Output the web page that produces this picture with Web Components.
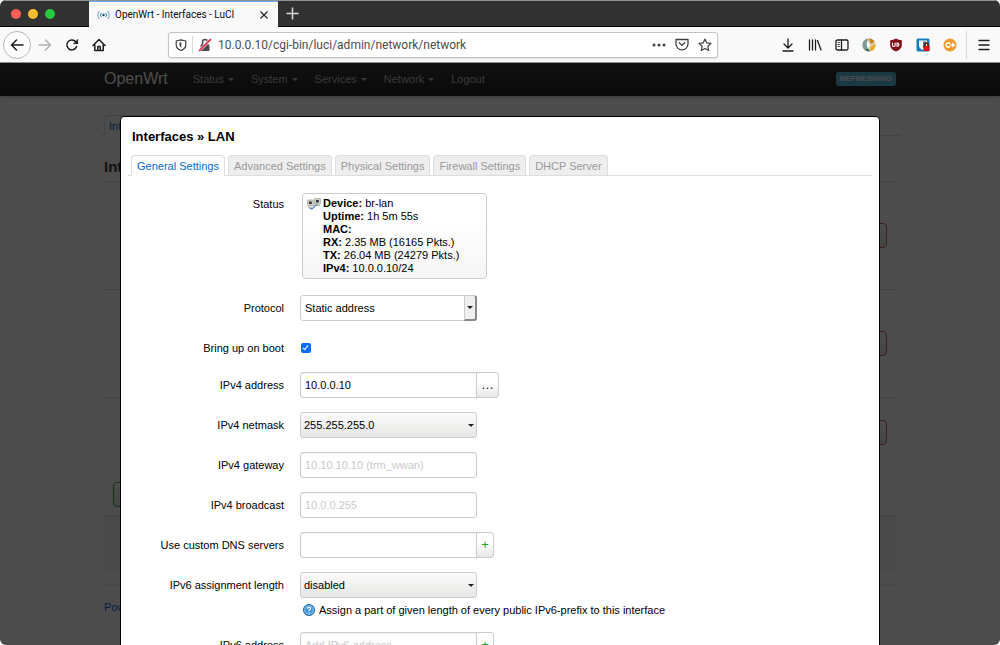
<!DOCTYPE html>
<html lang="en">
<head>
<meta charset="utf-8">
<title>OpenWrt - Interfaces - LuCI</title>
<style>
  html { background: #fff; }
  body { margin: 0; font: 11px/16px "Liberation Sans", Arial, sans-serif; color: #000; }
</style>
</head>
<body>
<browser-window>
  <browser-tabs slot="tabs"></browser-tabs>
  <browser-toolbar slot="toolbar"></browser-toolbar>
  <luci-header></luci-header>
  <luci-page></luci-page>
  <luci-modal slot="overlay" heading="Interfaces » LAN">
    <luci-status></luci-status>
    <luci-field label="Protocol" type="combo" value="Static address"></luci-field>
    <luci-field label="Bring up on boot" type="checkbox"></luci-field>
    <luci-field label="IPv4 address" type="text" value="10.0.0.10" action="…"></luci-field>
    <luci-field label="IPv4 netmask" type="select" value="255.255.255.0"></luci-field>
    <luci-field label="IPv4 gateway" type="text" placeholder="10.10.10.10 (trm_wwan)"></luci-field>
    <luci-field label="IPv4 broadcast" type="text" placeholder="10.0.0.255"></luci-field>
    <luci-field label="Use custom DNS servers" type="text" action="+"></luci-field>
    <luci-field label="IPv6 assignment length" type="select" value="disabled">Assign a part of given length of every public IPv6-prefix to this interface</luci-field>
    <luci-field label="IPv6 address" type="text" placeholder="Add IPv6 address…" action="+"></luci-field>
  </luci-modal>
</browser-window>

<script>
const define = (name, render) => customElements.define(name, class extends HTMLElement {
  constructor() { super(); this.attachShadow({ mode: 'open' }); }
  connectedCallback() { this.shadowRoot.innerHTML = render(this); }
});

define('browser-window', () => `
<style>
  :host { display: flex; flex-direction: column; height: 100vh; overflow: hidden; border-radius: 6px; background: #fff; }
  .view { flex: 1; min-height: 0; position: relative; overflow: hidden; }
  .shade { position: absolute; inset: 0; background: rgba(0,0,0,.7); display: flex; justify-content: center; align-items: flex-start; padding-top: 53px; }
</style>
<slot name="tabs"></slot>
<slot name="toolbar"></slot>
<div class="view"><slot></slot><div class="shade"><slot name="overlay"></slot></div></div>`);

define('browser-tabs', () => `
<style>
  :host { display: flex; height: 26px; background: #323232; border-top: 1px solid #8e9390; font-family: Roboto, sans-serif; }
  .lights { width: 89px; box-sizing: border-box; display: flex; align-items: center; gap: 5px; padding-left: 11px; border-bottom: 1px solid #000; }
  .lights i { width: 10px; height: 10px; border-radius: 50%; background: #ff5f57; margin-right: 2px; }
  .lights i:nth-child(2) { background: #febc2e; }
  .lights i:nth-child(3) { background: #28c840; }
  .tab { width: 189px; box-sizing: border-box; background: #f9f9fa; border-top: 1px solid #6aa9f5; display: flex; align-items: center; padding: 0 9px 0 8px; gap: 5px; }
  .tab span { flex: 1; font-size: 10px; line-height: 14px; color: #0c0c0d; white-space: nowrap; }
  button { border: 0; background: none; padding: 0; display: flex; }
  .rest { flex: 1; display: flex; align-items: center; padding-left: 8px; border-bottom: 1px solid #000; }
</style>
<div class="lights"><i></i><i></i><i></i></div>
<div class="tab">
  <svg width="13" height="12" viewBox="0 0 13 12" fill="none" stroke="#2f86b5" stroke-width="1"><circle cx="6.5" cy="6" r="1.2" fill="#15425c" stroke="none"/><path d="M4.5 3.8a3 3 0 0 0 0 4.4M8.5 3.8a3 3 0 0 1 0 4.4"/><path d="M2.5 2a5.6 5.6 0 0 0 0 8M10.500 2a5.600 5.600 0 0 1 0 8" stroke="#6d9cb5"/></svg>
  <span>OpenWrt - Interfaces - LuCI</span>
  <button aria-label="Close tab"><svg width="10" height="10" viewBox="0 0 10 10" stroke="#222" stroke-width="1.200"><path d="M1.500 1.500l7 7M8.500 1.500l-7 7"/></svg></button>
</div>
<div class="rest"><button aria-label="New tab"><svg width="13" height="13" viewBox="0 0 13 13" stroke="#e0e0e0" stroke-width="1.500"><path d="M6.500 .5v12M.5 6.500h12"/></svg></button></div>`);

define('browser-toolbar', () => `
<style>
  :host { display: flex; align-items: center; height: 35px; box-sizing: content-box; background: #f9f9fa; border-bottom: 1px solid #8b908d; padding: 0 3px; }
  button { border: 0; background: none; padding: 0; width: 27px; height: 28px; display: flex; align-items: center; justify-content: center; }
  .back { width: 28px; box-sizing: border-box; border: 1px solid #b5b5b8; border-radius: 50%; background: #fff; }
  svg { fill: none; stroke: #1c1c1f; stroke-width: 1.500; stroke-linecap: round; stroke-linejoin: round; flex: none; }
  .url { flex: 1; min-width: 0; margin: 0 56px; height: 26px; box-sizing: border-box; border: 1px solid #c3c3c6; border-radius: 3px; background: #fff; box-shadow: 0 1px 2px rgba(0,0,0,.1); display: flex; align-items: center; padding: 0 1px 0 0; }
  .url button { width: 23px; height: 24px; }
  .url .lock { border-left: 1px solid #dadadc; height: 18px; width: 24px; }
  .url input { flex: 1; min-width: 0; border: 0; outline: 0; padding: 0 0 0 2px; height: 22px; font: 12px/22px Roboto, sans-serif; color: #4c4c50; background: none; }
  hr { width: 1px; height: 28px; margin: 0 3px; border: 0; background: #d7d7db; }
</style>
<button class="back" aria-label="Back"><svg width="16" height="16" viewBox="0 0 16 16"><path d="M14 8H2.500M7.500 3l-5 5 5 5"/></svg></button>
<button aria-label="Forward"><svg width="16" height="16" viewBox="0 0 16 16" style="stroke:#b1b1b3"><path d="M2 8h11.500M8.500 3l5 5-5 5"/></svg></button>
<button aria-label="Reload"><svg width="14" height="14" viewBox="0 0 14 14"><path d="M11.600 8.500A5 5 0 1 1 10.800 3.800L12.300 5.300"/><path d="M12.800 1.500v4.200H8.600z" fill="#1c1c1f" stroke-width=".5"/></svg></button>
<button aria-label="Home"><svg width="14" height="14" viewBox="0 0 14 14"><path d="M1 7.500L7 1.500l6 6M2.800 6.500V12.500h8.400V6.500M5.800 12V8.500h2.400V12"/></svg></button>
<div class="url">
  <button aria-label="Tracking protection"><svg width="12" height="12" viewBox="0 0 12 12" style="stroke:#3f3f43;stroke-width:1.200"><path d="M6 .8L10.800 2v3.500C10.800 8.500 9 10.500 6 11.500 3 10.500 1.200 8.500 1.200 5.500V2z"/><path d="M6.300 3.200V8.600C5 8 4.500 7 4.500 5.500V3.600z" fill="#3f3f43" stroke="none"/></svg></button>
  <button class="lock" aria-label="Connection not secure"><svg width="14" height="14" viewBox="0 0 14 14" style="stroke:#4b4b4f"><rect x="2.500" y="6.500" width="9" height="6.500" rx="1" fill="#4b4b4f" stroke="none"/><path d="M4.500 6.500V4a2.500 2.500 0 0 1 5 0v2.500"/><path d="M1.500 12.500L12.500 1.500" stroke="#fff" stroke-width="2.800"/><path d="M1.500 12.500L12.500 1.500" stroke="#e21238" stroke-width="1.600"/></svg></button>
  <input type="text" aria-label="Address" value="10.0.0.10/cgi-bin/luci/admin/network/network">
  <button aria-label="Page actions"><svg width="14" height="4" viewBox="0 0 14 4" style="fill:#3f3f43;stroke:none"><circle cx="2" cy="2" r="1.500"/><circle cx="7" cy="2" r="1.500"/><circle cx="12" cy="2" r="1.500"/></svg></button>
  <button aria-label="Save to Pocket"><svg width="14" height="13" viewBox="0 0 14 13" style="stroke:#3f3f43;stroke-width:1.300"><path d="M1 1.500h12v4.500a6 5.800 0 0 1-12 0z"/><path d="M4.300 4.800L7 7.400l2.700-2.600"/></svg></button>
  <button aria-label="Bookmark"><svg width="14" height="14" viewBox="0 0 14 14" style="stroke:#3f3f43;stroke-width:1.200"><path d="M7 1l1.800 3.900 4.200.5-3.100 2.900.8 4.200L7 10.400l-3.700 2.100.8-4.200L1 5.400l4.200-.5z"/></svg></button>
</div>
<button aria-label="Downloads"><svg width="14" height="14" viewBox="0 0 14 14"><path d="M7 1v8.500M3 6l4 4 4-4M2 13h10" stroke-width="1.300"/></svg></button>
<button aria-label="Library"><svg width="14" height="14" viewBox="0 0 14 14" style="stroke-width:1.300"><path d="M1.500 2v10M4.500 2v10M7.500 2v10M9.500 2.500l3.500 9.500"/></svg></button>
<button aria-label="Sidebar"><svg width="14" height="12" viewBox="0 0 14 12" style="stroke-width:1.300"><rect x="1" y="1" width="12" height="10" rx="1.500"/><path d="M6.500 1v10"/><path d="M3 3.500h1.500M3 5.500h1.500M3 7.500h1.500" stroke-width=".8"/></svg></button>
<button aria-label="Extension"><svg width="14" height="14" viewBox="0 0 14 14" style="stroke:none"><circle cx="7" cy="7" r="6.500" fill="#d9cfae"/><path d="M6 .6A6.500 6.500 0 0 0 5 13.200L7 9 4.500 6z" fill="#7f9a96"/><path d="M6.500 .5a6.500 6.500 0 0 1 6 3.200L9 6z" fill="#c9821f"/><path d="M13.400 6a6.500 6.500 0 0 1-5 7.300L8.500 9z" fill="#e4a91c"/><path d="M5 3l3 4-2 4-1-3z" fill="#fff"/><path d="M3 11l2 2.200 3 .2-1.500-2.400z" fill="#3f6a55"/></svg></button>
<button aria-label="uBlock Origin"><svg width="14" height="14" viewBox="0 0 14 14" style="stroke:none"><path d="M7 .5C9 1.800 11 2.200 12.800 2.200V7c0 3.200-2.600 5.200-5.800 6.600C3.800 12.200 1.200 10.200 1.200 7V2.200C3 2.200 5 1.800 7 .5z" fill="#800f14"/><path d="M3.500 5v2.200a1.200 1.200 0 0 0 2.600 0V5M8 5v3.300h.6a1.700 1.700 0 0 0 0-3.300z" fill="none" stroke="#fff" stroke-width="1.100"/></svg></button>
<button aria-label="Bitwarden"><svg width="14" height="14" viewBox="0 0 14 14" style="stroke:none"><rect x=".5" y=".5" width="13" height="13" rx="1.500" fill="#1380bd"/><path d="M3 2.500h8v5c0 2-2 3.500-4 4.500-2-1-4-2.500-4-4.500z" fill="#fff"/><path d="M7 3.500h3v4c0 1.500-1.500 2.500-3 3.300z" fill="#1380bd"/><rect x="7.500" y="8" width="6" height="5" fill="#d8131b"/><path d="M8.800 8V6.800a1.700 1.700 0 0 1 3.400 0V8" fill="none" stroke="#6d1618"/></svg></button>
<button aria-label="Containers"><svg width="14" height="14" viewBox="0 0 14 14" style="stroke:none"><circle cx="7" cy="7" r="6.500" fill="#f09a2b"/><path d="M6.800 5.400a2.200 2.200 0 1 0 0 3.200M8.200 7h3.400M9.900 5.300v3.400" fill="none" stroke="#fff" stroke-width="1.400"/></svg></button>
<hr>
<button aria-label="Menu"><svg width="12" height="12" viewBox="0 0 12 12" style="stroke-width:1.300"><path d="M1 1.500h10M1 6h10M1 10.500h10"/></svg></button>`);

define('luci-header', () => `
<style>
  :host { display: block; background: linear-gradient(#3a3a3a, #222); box-shadow: 0 1px 3px rgba(0,0,0,.25); position: relative; }
  nav { max-width: 792px; margin: 0 auto; height: 32px; display: flex; align-items: center; gap: 17px; padding-bottom: 1px; }
  a { color: #bfbfbf; text-decoration: none; display: flex; align-items: center; gap: 4px; }
  .brand { font-size: 16px; color: #fff; line-height: 20px; margin-right: 8px; }
  .menu::after { content: ""; border: 3px solid transparent; border-top-color: currentColor; border-bottom: 0; }
  .badge { margin-left: auto; background: #5bc0de; color: #fff; font: bold 8px/14px "Liberation Sans", Arial, sans-serif; text-transform: uppercase; border-radius: 3px; padding: 0 4px; }
</style>
<nav>
  <a class="brand" href="#">OpenWrt</a>
  <a class="menu" href="#">Status</a><a class="menu" href="#">System</a><a class="menu" href="#">Services</a><a class="menu" href="#">Network</a><a href="#">Logout</a>
  <span class="badge">Refreshing</span>
</nav>`);

define('luci-page', () => `
<style>
  :host { display: block; max-width: 792px; margin: 0 auto; padding-top: 19px; }
  .tabs { display: flex; gap: 3px; height: 20px; border-bottom: 1px solid #ddd; margin: 0 -4px 0 -3px; padding-left: 3px; }
  .tabs a { box-sizing: border-box; height: 21px; padding: 2px 4px; border: 1px solid #ddd; border-radius: 4px 4px 0 0; background: #eee; color: #999; text-decoration: none; }
  .tabs a:first-child { background: #fff; border-bottom-color: #fff; color: #0069d6; }
  h2 { margin: 21px 0 4px; font-size: 15px; line-height: 20px; color: #404040; }
  .row { height: 108px; box-sizing: border-box; border-top: 1px solid #ddd; display: flex; align-items: center; justify-content: flex-end; padding-right: 9px; }
  .row.short { height: 70px; }
  button { font: inherit; height: 25px; padding: 0 8px; border: 1px solid #c66; border-radius: 4px; color: #b94a48; background: linear-gradient(#fff, #e6e6e6); }
  .add { border-color: #57a957; color: #46a546; margin: 15px 9px 8px; display: block; }
  .actions { height: 55px; background: #f5f5f5; border-top: 1px solid #ddd; box-sizing: border-box; }
  footer { margin-top: 14px; padding-top: 14px; border-top: 1px solid #eee; }
  footer a { color: #0069d6; text-decoration: none; }
</style>
<div class="tabs"><a href="#">Interfaces</a><a href="#">Global network options</a></div>
<h2>Interfaces</h2>
<div class="row"><button>Delete</button></div>
<div class="row"><button>Delete</button></div>
<div class="row short"><button>Delete</button></div>
<button class="add">Add new interface…</button>
<div class="actions"></div>
<footer><a href="#">Powered by LuCI</a></footer>`);

define('luci-modal', el => `
<style>
  :host { display: block; flex: 0 1 760px; box-sizing: border-box; background: #fff; border: 1px solid #000; border-radius: 4px; padding: 10px 7px; color: #000; }
  h4 { margin: 0 4px; font-size: 13px; line-height: 20px; }
  .tabs { display: flex; gap: 3px; margin: 8px 0 15px; padding-left: 3px; border-bottom: 1px solid #ddd; }
  .tabs button { font: inherit; height: 20px; padding: 0 5px; border: 1px solid #ddd; border-bottom: 0; border-radius: 4px 4px 0 0; background: #eee; color: #999; white-space: nowrap; }
  .tabs .on { height: 21px; margin-bottom: -1px; background: #fff; color: #0069d6; }
  form { display: flex; flex-direction: column; gap: 14px; }
</style>
<h4>${el.getAttribute('heading')}</h4>
<div class="tabs" role="tablist">
  <button role="tab" class="on">General Settings</button><button role="tab">Advanced Settings</button><button role="tab">Physical Settings</button><button role="tab">Firewall Settings</button><button role="tab">DHCP Server</button>
</div>
<form><slot></slot></form>`);

const ROW = `
  :host { display: grid; grid-template-columns: 156px 1fr; column-gap: 16px; align-items: start; }
  .label { text-align: right; padding-top: 5px; line-height: 16px; white-space: nowrap; }`;

define('luci-status', () => `
<style>${ROW}
  .box { justify-self: start; margin: 2px; min-width: 185px; height: 86px; box-sizing: border-box; border: 1px solid #ccc; border-radius: 4px; background: linear-gradient(#fff 30%, #f5f5f5); padding: 3px 4px; display: flex; gap: 2px; line-height: 13px; }
  svg { margin-top: 1px; }
</style>
<span class="label">Status</span>
<div class="box">
  <svg width="14" height="12" viewBox="0 0 14 12"><path d="M2.500 9.500c1 1.800 3 1.600 4 0s2.500-3 4-3" fill="none" stroke="#3f78c9" stroke-width="1.300"/><rect x=".5" y="2" width="6" height="5.500" rx=".5" fill="#cfd2c6" stroke="#a5a596" stroke-width=".7"/><path d="M2 3.500h2.800v2.500H2z" fill="#30343c"/><path d="M1 9h4.500" stroke="#a3a698"/><rect x="7.500" y=".5" width="6" height="5.500" rx=".5" fill="#cfd2c6" stroke="#a5a596" stroke-width=".7"/><path d="M9 2h2.800v2.500H9z" fill="#30343c"/><path d="M8.500 7.500H13" stroke="#a3a698"/></svg>
  <div><b>Device:</b> br-lan<br><b>Uptime:</b> 1h 5m 55s<br><b>MAC:</b><br><b>RX:</b> 2.35 MB (16165 Pkts.)<br><b>TX:</b> 26.04 MB (24279 Pkts.)<br><b>IPv4:</b> 10.0.0.10/24</div>
</div>`);

define('luci-field', el => {
  const a = n => el.getAttribute(n) || '';
  const type = a('type'), action = a('action');
  let control;
  if (type === 'checkbox') control = '<input id="c" type="checkbox" checked>';
  else if (type === 'select' || type === 'combo')
    control = `<span class="pick ${type}"><select id="c"><option>${a('value')}</option></select><i></i></span>`;
  else control = `<input id="c" type="text" value="${a('value')}" placeholder="${a('placeholder')}">`;
  const button = action ? `<button type="button" class="${action === '+' ? 'plus' : 'more'}">${action}</button>` : '';
  const hint = el.textContent.trim() ? `<p>
    <svg width="12" height="12" viewBox="0 0 12 12"><circle cx="6" cy="6" r="5.500" fill="#3d94d8" stroke="#1d68ad"/><circle cx="6" cy="6" r="4.200" fill="none" stroke="#b9dcf5" stroke-width=".7"/><path d="M4.500 4.800C4.500 2.900 7.600 3 7.500 4.800 7.400 5.900 6 5.800 6 7.100M6 8.200v1" fill="none" stroke="#fff" stroke-width="1.200"/></svg>
    <slot></slot></p>` : '';
  return `
<style>${ROW}
  .line { display: flex; height: 26px; }
  .line.checkbox { height: 23px; }
  input[type=text], select { box-sizing: border-box; width: 177px; height: 26px; margin: 0; font: inherit; color: #000; border: 1px solid #ccc; border-radius: 3px; outline: 0; background: #fff; padding: 0 4px; }
  input[type=text] { box-shadow: inset 0 1px 2px rgba(0,0,0,.06); }
  input::placeholder { color: #c9c9c9; opacity: 1; }
  input[type=checkbox] { width: 10px; height: 10px; margin: 8px 0 0 1px; appearance: none; border-radius: 2px; background: #0a6cff; display: grid; }
  input[type=checkbox]::after { content: ""; width: 2px; height: 5px; border: solid #fff; border-width: 0 1px 1px 0; transform: rotate(40deg); margin: 1px 0 0 3px; }
  .pick { position: relative; display: flex; }
  select { appearance: none; padding: 0 16px 0 3px; }
  .combo select { padding-left: 4px; }
  .select select { background: linear-gradient(#fbfbfb, #e6e6e4); }
  .pick i { position: absolute; right: 0; top: 0; width: 13px; height: 26px; box-sizing: border-box; display: grid; place-content: center; pointer-events: none; }
  .pick i::after { content: ""; border: 3px solid transparent; border-top-color: #222; border-bottom: 0; }
  .combo i { background: #efefef; border: 1px solid #ccc; border-right: 2px solid #888; border-bottom: 2px solid #888; border-radius: 0 3px 3px 0; }
  button { font: inherit; box-sizing: border-box; height: 26px; margin: 0 0 0 -1px; padding: 0; border: 1px solid #ccc; border-radius: 0 3px 3px 0; background: linear-gradient(#fff 40%, #e6e6e6); color: #222; }
  .more { width: 23px; font-size: 13px; }
  .plus { width: 18px; color: #1da81d; font-size: 13px; }
  .joined input { border-radius: 3px 0 0 3px; }
  p { margin: 4px 0 0 3px; display: flex; align-items: center; gap: 4px; line-height: 16px; }
</style>
<label class="label" for="c">${a('label')}</label>
<div><div class="line ${type} ${action ? 'joined' : ''}">${control}${button}</div>${hint}</div>`;
});
</script>
</body>
</html>
